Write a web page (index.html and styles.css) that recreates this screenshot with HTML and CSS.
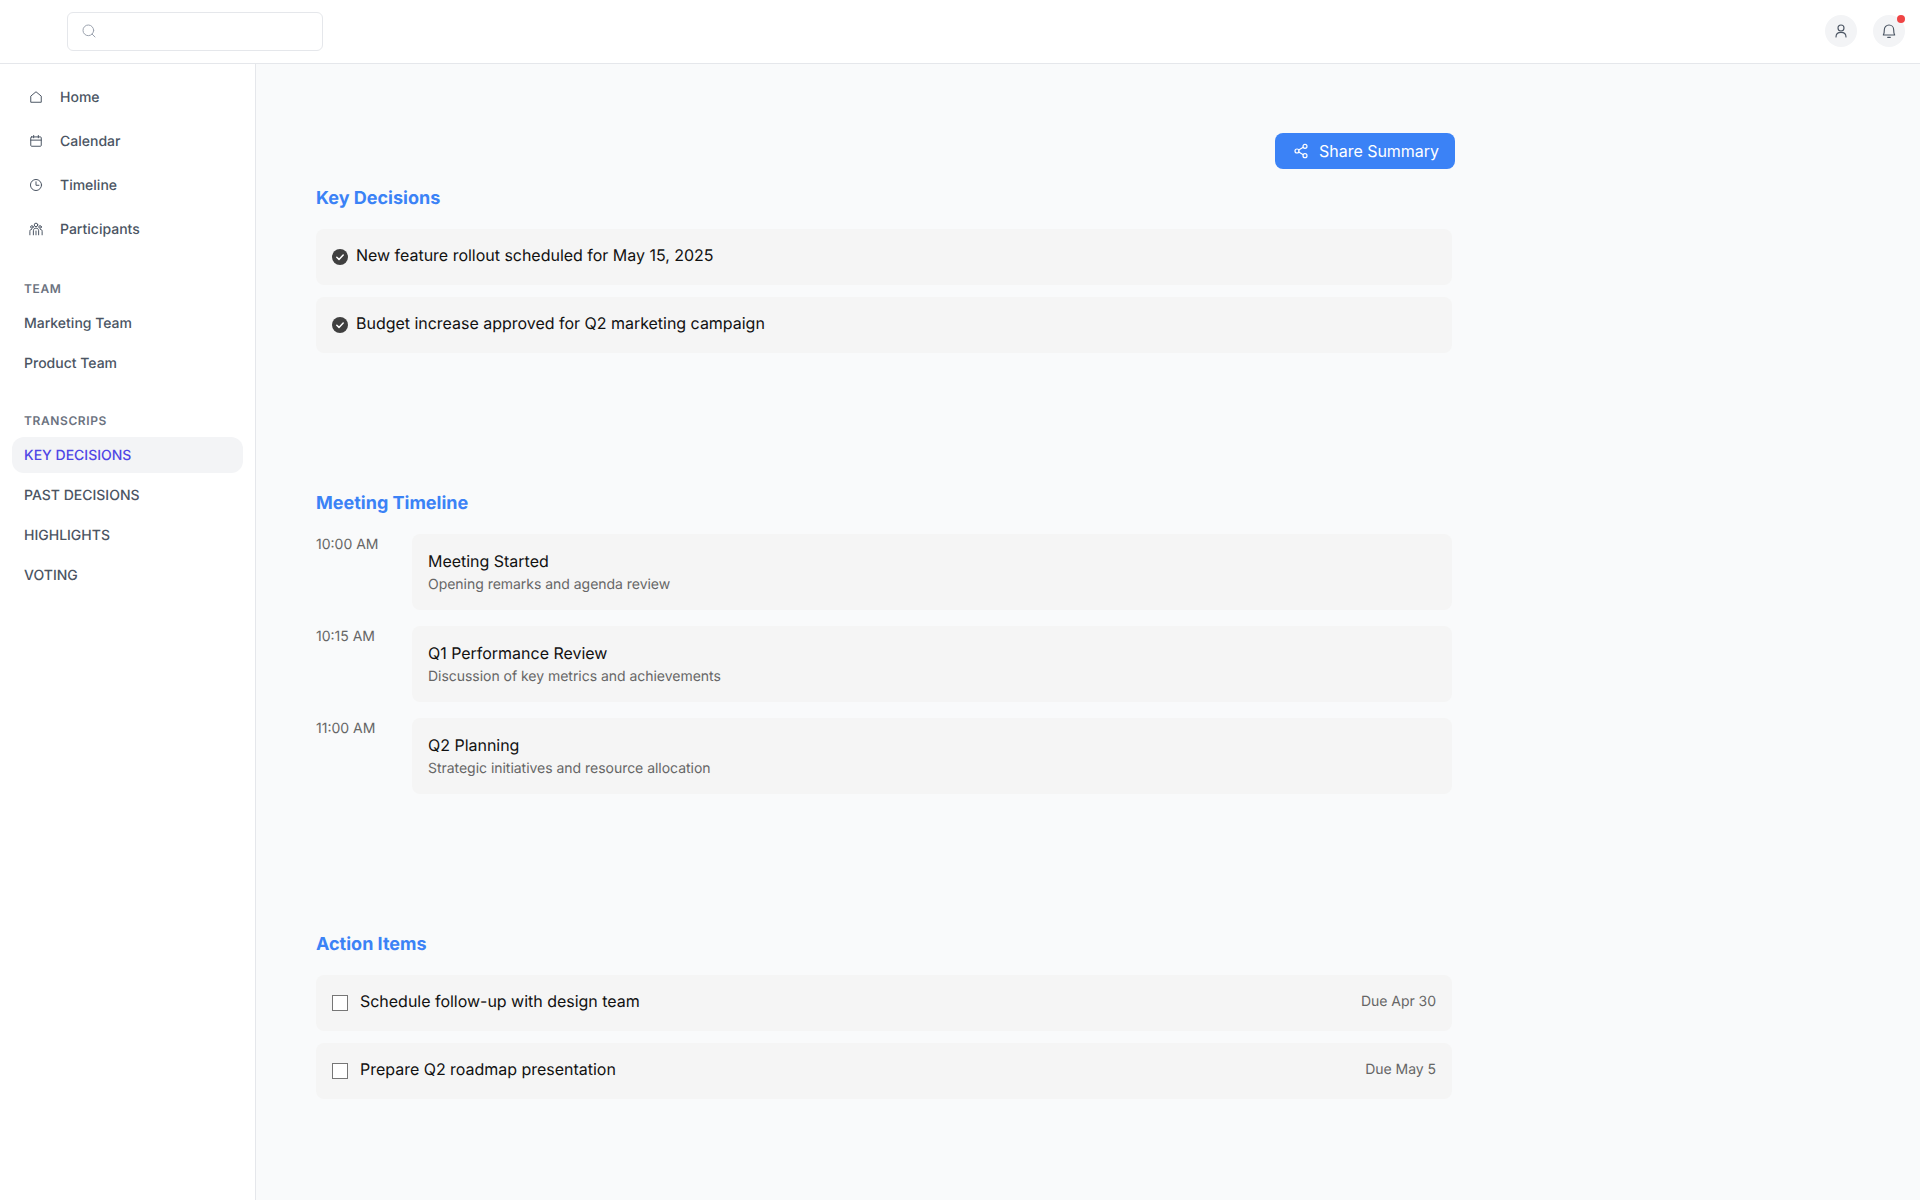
FILE: index.html
```html
<!DOCTYPE html>
<html lang="en">
<head>
<meta charset="utf-8">
<title>Key Decisions</title>
<link rel="stylesheet" href="styles.css">
</head>
<body>
<header class="topbar">
  <div class="search">
    <svg class="search-icon" viewBox="0 0 24 24" fill="none" stroke="currentColor" stroke-width="1.5" stroke-linecap="round"><circle cx="11" cy="11" r="8"/><path d="M21 21l-4.3-4.3"/></svg>
  </div>
  <div class="top-actions">
    <div class="round-btn">
      <svg viewBox="0 0 24 24" fill="none" stroke="currentColor" stroke-width="1.7" stroke-linecap="round" stroke-linejoin="round"><circle cx="12" cy="7.500" r="4.500"/><path d="M4.500 21c0-4.500 3-7 7.500-7s7.500 2.500 7.500 7"/></svg>
    </div>
    <div class="round-btn">
      <svg viewBox="0 0 24 24" fill="none" stroke="currentColor" stroke-width="1.7" stroke-linecap="round" stroke-linejoin="round"><path d="M5 10a7 7 0 0 1 14 0c0 4 .5 6 1.500 8h-17C4.500 16 5 14 5 10z"/><path d="M10 21.500h4"/></svg>
      <span class="dot"></span>
    </div>
  </div>
</header>
<div class="body-row">
  <aside class="sidebar">
    <nav class="main-nav">
      <a class="nav-item"><svg viewBox="0 0 24 24" fill="none" stroke="currentColor" stroke-width="1.700" stroke-linejoin="round"><path d="M3 21V10.500L12 3l9 7.500V21z"/></svg>Home</a>
      <a class="nav-item"><svg viewBox="0 0 24 24" fill="none" stroke="currentColor" stroke-width="1.700" stroke-linecap="round"><rect x="3" y="5" width="18" height="16" rx="1.500"/><path d="M3 10.500h18M8 2.500v4M16 2.500v4"/></svg>Calendar</a>
      <a class="nav-item"><svg viewBox="0 0 24 24" fill="none" stroke="currentColor" stroke-width="1.700" stroke-linecap="round" stroke-linejoin="round"><circle cx="12" cy="12" r="9.500"/><path d="M12 6.500V12.500h5"/></svg>Timeline</a>
      <a class="nav-item"><svg viewBox="0 0 24 24" fill="none" stroke="currentColor" stroke-width="1.700" stroke-linecap="round"><circle cx="12" cy="5" r="3"/><circle cx="5" cy="8.500" r="2.200"/><circle cx="19" cy="8.500" r="2.200"/><path d="M7.500 22v-7c0-3 2-4.500 4.500-4.500s4.500 1.500 4.500 4.500v7M12 15.500V22M1.500 22v-6c0-2 1-3.500 3-3.500M22.500 22v-6c0-2-1-3.500-3-3.500"/></svg>Participants</a>
    </nav>
    <section class="side-group">
      <h3 class="side-label">TEAM</h3>
      <a class="side-link">Marketing Team</a>
      <a class="side-link">Product Team</a>
    </section>
    <section class="side-group">
      <h3 class="side-label">TRANSCRIPS</h3>
      <a class="side-link active">KEY DECISIONS</a>
      <a class="side-link">PAST DECISIONS</a>
      <a class="side-link">HIGHLIGHTS</a>
      <a class="side-link">VOTING</a>
    </section>
  </aside>
  <main class="content">
    <div class="share-row">
      <button class="share-btn">
        <svg viewBox="0 0 24 24" fill="none" stroke="currentColor" stroke-width="1.800" stroke-linecap="round"><circle cx="18" cy="5" r="3"/><circle cx="6" cy="12" r="3"/><circle cx="18" cy="19" r="3"/><path d="M8.600 13.500l6.800 4M15.400 6.500l-6.800 4"/></svg>
        Share Summary
      </button>
    </div>
    <section class="block block-decisions">
      <h2 class="block-title">Key Decisions</h2>
      <div class="stack">
        <div class="card row">
          <svg class="check" viewBox="0 0 16 16"><circle cx="8" cy="8" r="8" fill="#404040"/><path d="M4.800 8.300l2.200 2.100 4.200-4.400" fill="none" stroke="#fff" stroke-width="1.500" stroke-linecap="round" stroke-linejoin="round"/></svg>
          <span class="card-text">New feature rollout scheduled for May 15, 2025</span>
        </div>
        <div class="card row">
          <svg class="check" viewBox="0 0 16 16"><circle cx="8" cy="8" r="8" fill="#404040"/><path d="M4.800 8.300l2.200 2.100 4.200-4.400" fill="none" stroke="#fff" stroke-width="1.500" stroke-linecap="round" stroke-linejoin="round"/></svg>
          <span class="card-text">Budget increase approved for Q2 marketing campaign</span>
        </div>
      </div>
    </section>
    <section class="block block-timeline">
      <h2 class="block-title">Meeting Timeline</h2>
      <div class="timeline">
        <div class="tl-row">
          <span class="tl-time">10:00 AM</span>
          <div class="card tl-card"><div class="card-text">Meeting Started</div><div class="tl-sub">Opening remarks and agenda review</div></div>
        </div>
        <div class="tl-row">
          <span class="tl-time">10:15 AM</span>
          <div class="card tl-card"><div class="card-text">Q1 Performance Review</div><div class="tl-sub">Discussion of key metrics and achievements</div></div>
        </div>
        <div class="tl-row">
          <span class="tl-time">11:00 AM</span>
          <div class="card tl-card"><div class="card-text">Q2 Planning</div><div class="tl-sub">Strategic initiatives and resource allocation</div></div>
        </div>
      </div>
    </section>
    <section class="block">
      <h2 class="block-title">Action Items</h2>
      <div class="stack">
        <div class="card row">
          <span class="box"></span>
          <span class="card-text action-text">Schedule follow-up with design team</span>
          <span class="due">Due Apr 30</span>
        </div>
        <div class="card row">
          <span class="box"></span>
          <span class="card-text action-text">Prepare Q2 roadmap presentation</span>
          <span class="due">Due May 5</span>
        </div>
      </div>
    </section>
  </main>
</div>
</body>
</html>
```
FILE: styles.css
```css
* { box-sizing: border-box; }
html, body { margin: 0; height: 100%; }
body {
  font-family: Inter, "Liberation Sans", sans-serif;
  background: #f9fafb;
  color: #111;
  display: flex;
  flex-direction: column;
  height: 1200px;
  overflow: hidden;
  text-rendering: geometricPrecision;
}
.topbar {
  height: 64px;
  flex: none;
  background: #fff;
  border-bottom: 1px solid #e5e7eb;
  display: flex;
  align-items: center;
  justify-content: space-between;
  padding: 0 15px 1px 67px;
}
.search {
  width: 256px;
  height: 39px;
  border: 1px solid #e5e7eb;
  border-radius: 6px;
  background: #fff;
  display: flex;
  align-items: center;
  padding-left: 13px;
}
.search-icon { width: 16px; height: 16px; color: #9ca3af; }
.top-actions { display: flex; gap: 16px; }
.round-btn {
  position: relative;
  width: 32px;
  height: 32px;
  border-radius: 50%;
  background: #f3f4f6;
  color: #4b5563;
  display: flex;
  align-items: center;
  justify-content: center;
}
.round-btn svg { width: 16px; height: 16px; }
.dot {
  position: absolute;
  top: 0;
  right: 0;
  width: 8px;
  height: 8px;
  border-radius: 50%;
  background: #ef4444;
}
.body-row { flex: 1; display: flex; min-height: 0; }
.sidebar {
  width: 256px;
  flex: none;
  background: #fff;
  border-right: 1px solid #e5e7eb;
  padding: 14px 12px 0;
}
.main-nav { display: flex; flex-direction: column; gap: 4px; }
.nav-item {
  height: 40px;
  display: flex;
  align-items: center;
  gap: 16px;
  padding-left: 16px;
  font-size: 14px;
  line-height: 20px;
  font-weight: 500;
  color: #4b5563;
}
.nav-item svg { width: 14px; height: 14px; flex: none; margin: 0 1px 2px; }
.side-group { margin-top: 31px; display: flex; flex-direction: column; gap: 4px; }
.side-label {
  margin: 0 0 4px;
  padding-left: 12px;
  font-size: 12px;
  line-height: 16px;
  font-weight: 600;
  letter-spacing: 0.6px;
  color: #6b7280;
}
.side-group + .side-group { margin-top: 32px; }
.side-link {
  height: 36px;
  display: flex;
  align-items: center;
  padding: 1px 0 0 12px;
  border-radius: 12px;
  font-size: 14px;
  line-height: 20px;
  font-weight: 500;
  color: #4b5563;
}
.side-link.active { background: #f3f4f6; color: #4f46e5; }
.content { flex: 1; padding: 69px 0 0 60px; min-width: 0; }
.share-row { width: 1139px; display: flex; justify-content: flex-end; }
.share-btn {
  height: 36px;
  width: 180px;
  border: 0;
  border-radius: 8px;
  background: #3b82f6;
  color: #fff;
  font: 400 16px/24px Inter, "Liberation Sans", sans-serif;
  letter-spacing: -0.02px;
  display: flex;
  align-items: center;
  gap: 10px;
  padding: 0 0 0 18px;
}
.share-btn svg { width: 16px; height: 16px; }
.block { width: 1136px; }
.block-decisions { margin-top: 16px; }
.block-timeline { margin-top: 137px; }
.block-timeline + .block { margin-top: 137px; }
.block-title {
  margin: 0 0 16px;
  font-size: 18px;
  line-height: 28px;
  font-weight: 700;
  color: #3b82f6;
}
.stack { display: flex; flex-direction: column; gap: 12px; }
.card { background: #f5f5f5; border-radius: 8px; }
.row { height: 56px; display: flex; align-items: center; padding: 0 16px; }
.check { width: 16px; height: 16px; flex: none; margin-right: 8px; }
.card-text { font-size: 16px; line-height: 24px; color: #111; margin-top: -4px; letter-spacing: -0.02px; }
.box {
  width: 16px;
  height: 16px;
  flex: none;
  border: 1px solid #767676;
  background: #fff;
  margin-right: 12px;
}
.action-text { flex: 1; }
.due { font-size: 14px; line-height: 20px; color: #666; margin-top: -2px; letter-spacing: -0.03px; }
.timeline { display: flex; flex-direction: column; gap: 16px; }
.tl-row { display: flex; }
.tl-time { width: 96px; flex: none; font-size: 14px; line-height: 20px; color: #666; margin-top: 1px; }
.tl-card { flex: 1; height: 76px; padding: 15px 16px 0; }
.tl-card .card-text { margin-top: 0; }
.tl-sub { font-size: 14px; line-height: 20px; color: #666; margin-top: 2px; letter-spacing: -0.03px; }
```
